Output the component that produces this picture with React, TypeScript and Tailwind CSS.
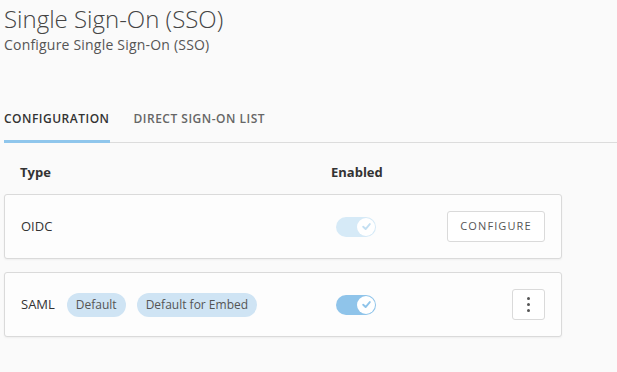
import React from "react";

function Toggle({ faded }: { faded?: boolean }) {
  return (
    <div
      className={
        "relative h-[20px] w-[40px] rounded-full " +
        (faded ? "bg-[#d6eaf7]" : "bg-[#8fc4ea]")
      }
    >
      <div className="absolute right-[1px] top-[1px] flex h-[18px] w-[18px] items-center justify-center rounded-full bg-white">
        <svg width="11" height="11" viewBox="0 0 10 10" fill="none">
          <path
            d="M2 5.2 L4.2 7.3 L8 2.8"
            stroke={faded ? "#c3dff2" : "#8fc4ea"}
            strokeWidth="1.7"
            strokeLinecap="round"
            strokeLinejoin="round"
          />
        </svg>
      </div>
    </div>
  );
}

function Badge({ children }: { children: React.ReactNode }) {
  return (
    <span className="inline-flex h-[24px] items-center rounded-full bg-[#cfe4f4] px-[9px] text-[12px] font-medium text-[#555]">
      {children}
    </span>
  );
}

export default function App() {
  return (
    <div className="min-h-screen bg-[#fafafa] pl-1 font-['Open_Sans',sans-serif] text-[#333]">
      <h1 className="pt-[3px] text-[24px] font-light leading-[32px] text-[#444]">
        Single Sign-On (SSO)
      </h1>
      <p className="text-[14px] leading-[20px] tracking-[0.2px] text-[#555]">
        Configure Single Sign-On (SSO)
      </p>

      <div className="mt-[56px] flex border-b border-[#dcdcdc]">
        <div className="-mb-px border-b-[3px] border-[#8fc6ec] pb-[13px] text-[12px] font-semibold leading-[16px] tracking-[0.5px] text-[#333]">
          CONFIGURATION
        </div>
        <div className="ml-[24px] pb-[13px] text-[12px] font-semibold leading-[16px] tracking-[0.5px] text-[#666]">
          DIRECT SIGN-ON LIST
        </div>
      </div>

      <div className="w-[558px]">
        <div className="mt-[20px] flex px-4 text-[13px] font-bold leading-[18px] text-[#333]">
          <div className="w-[311px]">Type</div>
          <div>Enabled</div>
        </div>

        <div className="mt-[13px] flex h-[65px] items-center rounded-[3px] border border-[#dadada] bg-[#fdfdfd] px-4 shadow-[0_1px_2px_rgba(0,0,0,0.05)]">
          <div className="w-[315px] text-[13px] text-[#333]">OIDC</div>
          <Toggle faded />
          <div className="flex flex-1 justify-end">
            <button className="h-[31px] w-[98px] rounded-[3px] border border-[#dadada] bg-white text-[11px] font-medium tracking-[1.1px] text-[#555]">
              CONFIGURE
            </button>
          </div>
        </div>

        <div className="mt-[13px] flex h-[65px] items-center rounded-[3px] border border-[#dadada] bg-[#fdfdfd] px-4 shadow-[0_1px_2px_rgba(0,0,0,0.05)]">
          <div className="flex w-[315px] items-center gap-[11px] text-[13px] text-[#333]">
            <span className="mr-[1px]">SAML</span>
            <Badge>Default</Badge>
            <Badge>Default for Embed</Badge>
          </div>
          <Toggle />
          <div className="flex flex-1 justify-end">
            <button className="flex h-[31px] w-[33px] flex-col items-center justify-center gap-[3px] rounded-[3px] border border-[#dadada] bg-white">
              <span className="h-[3px] w-[3px] rounded-full bg-[#555]" />
              <span className="h-[3px] w-[3px] rounded-full bg-[#555]" />
              <span className="h-[3px] w-[3px] rounded-full bg-[#555]" />
            </button>
          </div>
        </div>
      </div>
    </div>
  );
}
